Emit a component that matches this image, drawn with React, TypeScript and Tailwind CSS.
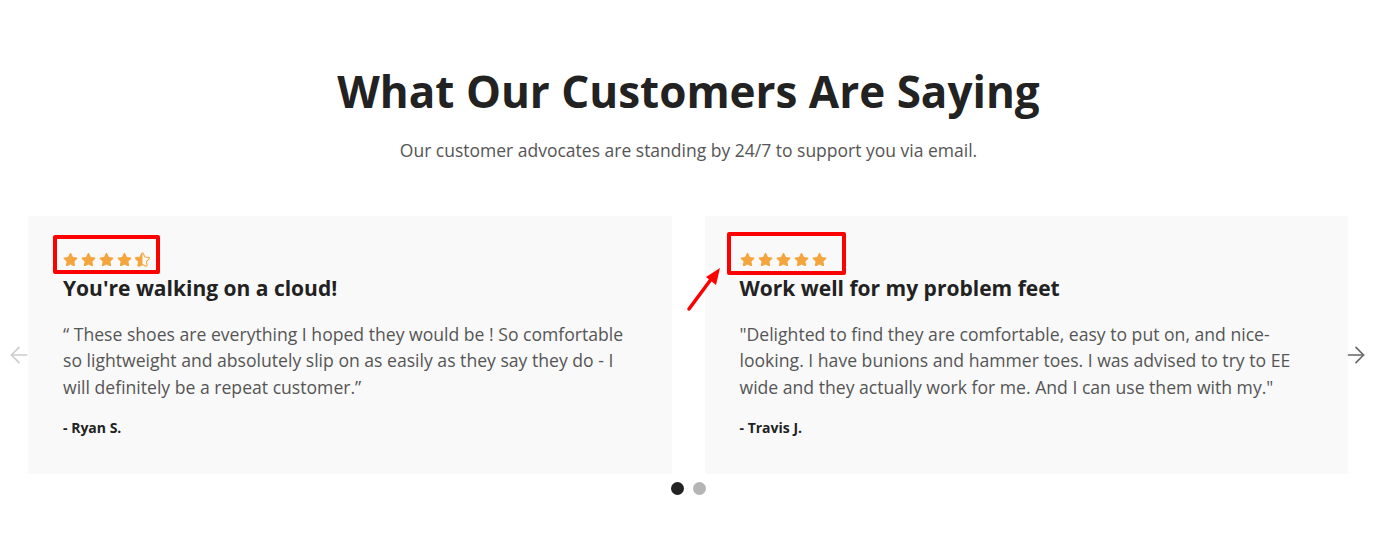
import { ArrowLeft, ArrowRight } from "lucide-react";

type Review = {
  rating: number;
  title: string;
  body: string;
  author: string;
};

const REVIEWS: Review[] = [
  {
    rating: 4.5,
    title: "You're walking on a cloud!",
    body: "“ These shoes are everything I hoped they would be ! So comfortable so lightweight and absolutely slip on as easily as they say they do - I will definitely be a repeat customer.”",
    author: "- Ryan S.",
  },
  {
    rating: 5,
    title: "Work well for my problem feet",
    body: "\"Delighted to find they are comfortable, easy to put on, and nice-looking. I have bunions and hammer toes. I was advised to try to EE wide and they actually work for me. And I can use them with my.\"",
    author: "- Travis J.",
  },
];

const STAR =
  "M259.3 17.8L194 150.2 47.9 171.5c-26.2 3.8-36.7 36.1-17.7 54.6l105.7 103-25 145.5c-4.5 26.3 23.2 46 46.4 33.7L288 439.6l130.7 68.7c23.2 12.2 50.9-7.4 46.4-33.7l-25-145.5 105.7-103c19-18.5 8.5-50.8-17.7-54.6L382 150.2 316.7 17.8c-11.7-23.6-45.6-23.9-57.4 0z";

function Star({ fill }: { fill: "full" | "half" }) {
  if (fill === "full") {
    return (
      <svg viewBox="0 0 576 512" className="h-[13.3px] w-[15px]">
        <path d={STAR} fill="#f4a53d" />
      </svg>
    );
  }
  return (
    <svg viewBox="0 0 576 512" className="h-[13.3px] w-[15px] overflow-visible">
      <defs>
        <clipPath id="half-left">
          <rect x="0" y="0" width="288" height="512" />
        </clipPath>
      </defs>
      <path d={STAR} fill="none" stroke="#f4a53d" strokeWidth="40" strokeLinejoin="round" />
      <path d={STAR} fill="#f4a53d" clipPath="url(#half-left)" />
    </svg>
  );
}

function Stars({ rating }: { rating: number }) {
  const full = Math.floor(rating);
  const half = rating - full >= 0.5;
  return (
    <div className="flex h-[17.5px] items-center gap-[3px]">
      {Array.from({ length: full }).map((_, i) => (
        <Star key={i} fill="full" />
      ))}
      {half && <Star fill="half" />}
    </div>
  );
}

function ReviewCard({ review, highlight }: { review: Review; highlight: "left" | "right" }) {
  return (
    <article className="relative flex h-[258px] flex-col bg-[#f9f9f9] px-[35px] pt-[35px]">
      <div
        aria-hidden
        className={
          highlight === "left"
            ? "pointer-events-none absolute left-[25px] top-[19px] h-[39px] w-[107px] rounded-[2px] border-4 border-[#f00]"
            : "pointer-events-none absolute left-[22px] top-[16px] h-[43px] w-[119px] rounded-[2px] border-4 border-[#f00]"
        }
      />
      <Stars rating={review.rating} />
      <h3 className="mt-[4px] text-[21px] font-bold leading-[30px] text-[#222]">
        {review.title}
      </h3>
      <p className="mt-[18px] text-[17.6px] leading-[26.5px] text-[#555]">{review.body}</p>
      <p className="mt-[17px] text-[14px] font-bold text-[#222]">{review.author}</p>
    </article>
  );
}

export default function App() {
  return (
    <section
      className="h-[544px] w-full bg-white pt-[59px]"
      style={{ fontFamily: '"Open Sans", sans-serif' }}
    >
      <h2 className="text-center text-[44px] font-bold leading-[64px] text-[#222]">
        What Our Customers Are Saying
      </h2>
      <p className="mt-[14px] text-center text-[17.5px] leading-[26px] text-[#555]">
        Our customer advocates are standing by 24/7 to support you via email.
      </p>

      <div className="relative mt-[53px] px-[28px] pr-[29px]">
        <div className="grid grid-cols-2 gap-[33px]">
          <ReviewCard review={REVIEWS[0]} highlight="left" />
          <ReviewCard review={REVIEWS[1]} highlight="right" />
        </div>

        {/* annotation arrow */}
        <svg
          aria-hidden
          viewBox="0 0 40 50"
          className="pointer-events-none absolute left-[684px] top-[48px] h-[50px] w-[40px]"
        >
          <line x1="5" y1="45" x2="28" y2="14" stroke="#f00" strokeWidth="3.5" strokeLinecap="round" />
          <polygon points="36,4 22,13 32,21" fill="#f00" />
        </svg>

        <button
          aria-label="Previous"
          className="absolute left-[6px] top-[126px] text-[#ccc]"
        >
          <ArrowLeft className="size-[26px]" strokeWidth={1.5} />
        </button>
        <button
          aria-label="Next"
          className="absolute right-[8px] top-[126px] text-[#666]"
        >
          <ArrowRight className="size-[26px]" strokeWidth={1.5} />
        </button>
      </div>

      <div className="mt-[8px] flex justify-center gap-[9px]">
        <span className="size-[13px] rounded-full bg-[#222]" />
        <span className="size-[13px] rounded-full bg-[#b5b5b5]" />
      </div>
    </section>
  );
}
